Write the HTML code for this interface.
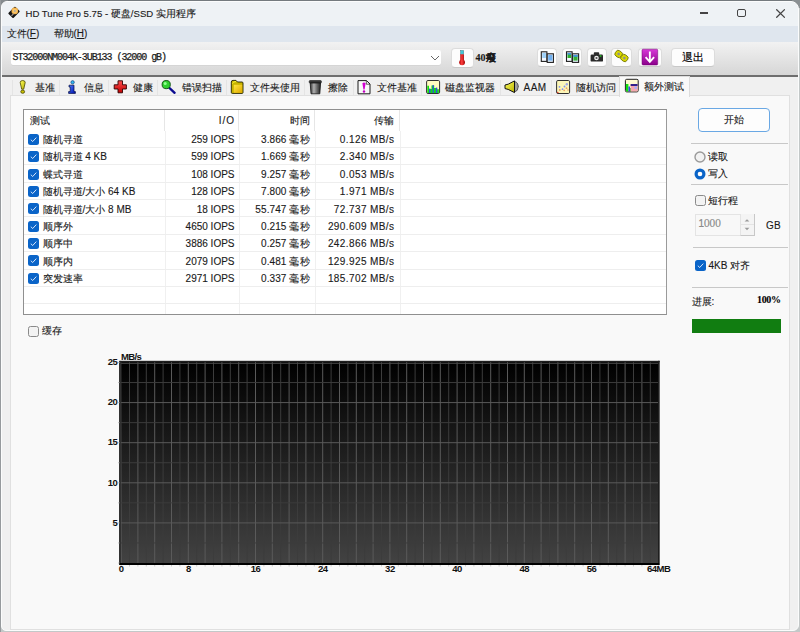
<!DOCTYPE html>
<html><head><meta charset="utf-8">
<style>
html,body{margin:0;padding:0;}
body{width:800px;height:632px;overflow:hidden;position:relative;background:#e8e8e8;font-family:"Liberation Sans",sans-serif;font-size:10px;color:#1a1a1a;}
.abs{position:absolute;}
.t{white-space:nowrap;line-height:12px;font-size:10px;font-weight:500;-webkit-text-stroke:0.12px #1a1a1a;}
.r{text-align:right;}
.tbtn{box-sizing:border-box;background:#fdfdfd;border:1px solid #dcdcdc;border-bottom-color:#c8c8c8;border-radius:4px;display:flex;align-items:center;justify-content:center;}
.clab{font-size:9.5px;line-height:11px;color:#111;white-space:nowrap;font-weight:bold;letter-spacing:-0.5px;}
.sep{position:absolute;height:1px;background:#c8c8c8;}
</style></head><body>
<div class="abs" style="left:0;top:0;width:800px;height:632px;background:#c3c8c8"></div>
<div class="abs" style="left:0;top:0;width:800px;height:1px;background:#747a7e"></div>
<div class="abs" style="left:0;top:0;width:8px;height:8px;background:#858b8e"></div>
<div class="abs" style="left:792px;top:0;width:8px;height:8px;background:#8a9093"></div>
<div class="abs" style="left:0;top:0;width:1px;height:632px;background:#969a9d"></div>
<div class="abs" style="left:1px;top:1px;width:796px;height:628px;border:1px solid #fbfcfc;border-radius:6px 8px 6px 5px;background:#f0f0f0;overflow:hidden">
  <div class="abs" style="left:0;top:0;width:797px;height:24px;background:#eef2f5"></div>
  <div class="abs" style="left:0;top:24px;width:797px;height:16px;background:#dfe6ee"></div>
  <div class="abs" style="left:0;top:40px;width:797px;height:33px;background:linear-gradient(#f2f2f2,#d6d6d6)"></div>
  <div class="abs" style="left:0;top:73px;width:797px;height:1.5px;background:#6e6e6e"></div>
</div>
<div class="abs" style="left:0;top:0"><svg width="24" height="24" viewBox="0 0 24 24"><g transform="translate(14 12.4) rotate(-45)"><rect x="-4.9" y="-3.6" width="9.8" height="7.2" rx="0.9" fill="#141414"/></g><circle cx="14.8" cy="10.9" r="3.3" fill="#f2b24a"/><circle cx="14.8" cy="10.9" r="2.2" fill="#f8c870"/><circle cx="14.8" cy="10.9" r="1" fill="#b0aca0"/><path d="M11.5 15.8 L13.6 13.6" stroke="#a09890" stroke-width="1.2"/></svg></div>
<div class="abs t" style="left:25.5px;top:7.5px;font-size:9.6px;color:#1a1a1a">HD Tune Pro 5.75 - 硬盘/SSD 实用程序</div>
<div class="abs" style="left:699.6px;top:12.3px;width:8.3px;height:1.4px;background:#444"></div>
<div class="abs" style="left:737.4px;top:8.9px;width:6.2px;height:6.2px;border:1.3px solid #444;border-radius:2px"></div>
<svg class="abs" style="left:776px;top:8.8px" width="9.2" height="9" viewBox="0 0 9.2 9"><path d="M0.3 0.3 L8.9 8.7 M8.9 0.3 L0.3 8.7" stroke="#444" stroke-width="1.25"/></svg>
<div class="abs t" style="left:6.5px;top:28px">文件(<u>F</u>)</div>
<div class="abs t" style="left:53.5px;top:28px">帮助(<u>H</u>)</div>

<div class="abs" style="left:10.5px;top:49.6px;width:430.8px;height:15.4px;background:#fff;border-radius:2px;box-shadow:0 0.5px 0 #ccc"></div>
<div class="abs" style="left:12.5px;top:52px;font-family:'Liberation Mono',monospace;font-size:10px;letter-spacing:-1.05px;line-height:12px;white-space:nowrap;color:#222;-webkit-text-stroke:0.25px #222">ST32000NM004K-3UB133 (32000 gB)</div>
<svg class="abs" style="left:430px;top:54.5px" width="10" height="6" viewBox="0 0 10 6"><path d="M1 1 L5 5 L9 1" fill="none" stroke="#666" stroke-width="1"/></svg>

<div class="abs tbtn" style="left:450.9px;top:47.9px;width:23.0px;height:19.800000000000004px"></div>
<div class="abs t" style="left:475.5px;top:52px;font-weight:bold;font-family:'Liberation Serif',serif;font-size:10px">40癈</div>
<div class="abs tbtn" style="left:536.75px;top:47.7px;width:20.25px;height:19.5px"></div>
<div class="abs tbtn" style="left:562px;top:47.7px;width:20px;height:19.5px"></div>
<div class="abs tbtn" style="left:586.5px;top:47.7px;width:20.5px;height:19.5px"></div>
<div class="abs tbtn" style="left:610.5px;top:47.7px;width:21.700000000000045px;height:19.5px"></div>
<div class="abs tbtn" style="left:638px;top:47.7px;width:23.5px;height:19.5px"></div>
<div class="abs tbtn" style="left:671.2px;top:47.7px;width:43.5px;height:19.5px"><span class="t" style="color:#000;font-size:11px;-webkit-text-stroke:0.15px #000">退出</span></div>
<svg class="abs" style="left:0;top:0" width="800" height="80" viewBox="0 0 800 80">
<defs><linearGradient id="pg" x1="0" y1="0" x2="0" y2="1"><stop offset="0" stop-color="#d838d8"/><stop offset="1" stop-color="#8a008a"/></linearGradient>
<linearGradient id="tg" x1="0" y1="0" x2="1" y2="0"><stop offset="0" stop-color="#b00000"/><stop offset="0.45" stop-color="#ff4040"/><stop offset="1" stop-color="#a00000"/></linearGradient></defs>
<!-- thermometer -->
<rect x="460.6" y="50.5" width="3" height="4" fill="#40c8d8" stroke="#206070" stroke-width="0.4"/>
<rect x="460.3" y="54.3" width="3.6" height="7" fill="url(#tg)"/>
<circle cx="462.1" cy="62.3" r="2.9" fill="url(#tg)"/>
<!-- icon1 -->
<rect x="541.3" y="51.8" width="5.6" height="9.6" fill="#f4f8ff" stroke="#202020" stroke-width="1.1"/>
<rect x="542.3" y="53" width="3.6" height="5" fill="#9cd0f8"/>
<rect x="547.2" y="53.8" width="6.2" height="8.6" fill="#e8f2ff" stroke="#202020" stroke-width="1.1"/>
<rect x="548.2" y="55" width="4.2" height="5.6" fill="#70b0f0"/>
<!-- icon2 -->
<rect x="566.5" y="51.8" width="5.6" height="9.6" fill="#f4f8ff" stroke="#202020" stroke-width="1.1"/>
<rect x="567.5" y="53" width="3.6" height="5" fill="#30b030"/>
<rect x="567.5" y="53" width="3.6" height="1.6" fill="#4090e0"/>
<rect x="572.4" y="53.8" width="6.2" height="8.6" fill="#e8f2ff" stroke="#202020" stroke-width="1.1"/>
<rect x="573.4" y="55" width="4.2" height="5.6" fill="#38b038"/>
<rect x="573.4" y="55" width="4.2" height="1.8" fill="#4090e0"/>
<!-- camera -->
<rect x="590.6" y="54.6" width="12.4" height="7" rx="1.2" fill="#2a2a2a"/>
<rect x="593.8" y="52.2" width="5.4" height="2.8" rx="0.8" fill="#2a2a2a"/>
<circle cx="596.5" cy="58" r="2.3" fill="#f0f0f0"/>
<circle cx="596.5" cy="58" r="1.1" fill="#505050"/>
<rect x="599.8" y="55.3" width="1.6" height="1.4" fill="#20d020"/>
<!-- chain -->
<g transform="rotate(35 621.5 56)">
<rect x="614.5" y="52.8" width="7" height="6.4" rx="2.5" fill="#d8d800" stroke="#707000" stroke-width="0.8"/>
<rect x="621.5" y="52.8" width="7" height="6.4" rx="2.5" fill="#d8d800" stroke="#707000" stroke-width="0.8"/>
<circle cx="618" cy="56" r="1.3" fill="#909090"/><circle cx="625" cy="56" r="1.3" fill="#909090"/>
</g>
<!-- purple -->
<rect x="642" y="49.2" width="15.7" height="15.8" rx="1" fill="url(#pg)" stroke="#700070" stroke-width="0.5"/>
<path d="M649.85 51.5 L649.85 61.5" stroke="#fff" stroke-width="1.9"/>
<path d="M645.6 57.2 L649.85 61.8 L654.1 57.2" fill="none" stroke="#fff" stroke-width="1.9"/>
</svg>

<!-- tab panel -->
<div class="abs" style="left:9.5px;top:95px;width:778.5px;height:532.5px;background:#f9f9f9;border:1px solid #e0e0e0"></div>
<div class="abs" style="left:12px;top:79.6px;width:46px;height:15.4px;background:#f0f0f0;border-left:1px solid #e4e4e4"></div>
<div class="abs t" style="left:35px;top:82.3px">基准</div>
<div class="abs" style="left:59px;top:79.6px;width:47.900000000000006px;height:15.4px;background:#f0f0f0;border-left:1px solid #e4e4e4"></div>
<div class="abs t" style="left:83.75px;top:82.3px">信息</div>
<div class="abs" style="left:107.9px;top:79.6px;width:48.099999999999994px;height:15.4px;background:#f0f0f0;border-left:1px solid #e4e4e4"></div>
<div class="abs t" style="left:132.6px;top:82.3px">健康</div>
<div class="abs" style="left:157px;top:79.6px;width:67.75px;height:15.4px;background:#f0f0f0;border-left:1px solid #e4e4e4"></div>
<div class="abs t" style="left:181.7px;top:82.3px">错误扫描</div>
<div class="abs" style="left:225.75px;top:79.6px;width:77.0px;height:15.4px;background:#f0f0f0;border-left:1px solid #e4e4e4"></div>
<div class="abs t" style="left:249.5px;top:82.3px">文件夹使用</div>
<div class="abs" style="left:303.75px;top:79.6px;width:48.25px;height:15.4px;background:#f0f0f0;border-left:1px solid #e4e4e4"></div>
<div class="abs t" style="left:328.25px;top:82.3px">擦除</div>
<div class="abs" style="left:353px;top:79.6px;width:67px;height:15.4px;background:#f0f0f0;border-left:1px solid #e4e4e4"></div>
<div class="abs t" style="left:377px;top:82.3px">文件基准</div>
<div class="abs" style="left:421px;top:79.6px;width:77.69999999999999px;height:15.4px;background:#f0f0f0;border-left:1px solid #e4e4e4"></div>
<div class="abs t" style="left:445px;top:82.3px">磁盘监视器</div>
<div class="abs" style="left:499.7px;top:79.6px;width:50.55000000000001px;height:15.4px;background:#f0f0f0;border-left:1px solid #e4e4e4"></div>
<div class="abs t" style="left:523.5px;top:82.3px;letter-spacing:0.5px">AAM</div>
<div class="abs" style="left:551.25px;top:79.6px;width:66.5px;height:15.4px;background:#f0f0f0;border-left:1px solid #e4e4e4"></div>
<div class="abs t" style="left:575.5px;top:82.3px">随机访问</div>
<div class="abs" style="left:618.75px;top:76px;width:69.25px;height:20px;background:#f9f9f9;border:1px solid #dcdcdc;border-bottom:none"></div>
<div class="abs t" style="left:644px;top:80.5px">额外测试</div>
<svg class="abs" style="left:0;top:0" width="800" height="100" viewBox="0 0 800 100">
<defs>
<linearGradient id="gy" x1="0" y1="0" x2="1" y2="1"><stop offset="0" stop-color="#ffff60"/><stop offset="1" stop-color="#b8b000"/></linearGradient>
<linearGradient id="gr" x1="0" y1="0" x2="0" y2="1"><stop offset="0" stop-color="#ff5050"/><stop offset="1" stop-color="#c00000"/></linearGradient>
<linearGradient id="gb" x1="0" y1="0" x2="1" y2="1"><stop offset="0" stop-color="#4a7aff"/><stop offset="1" stop-color="#0010b0"/></linearGradient>
<linearGradient id="gf" x1="0" y1="0" x2="1" y2="1"><stop offset="0" stop-color="#ffe640"/><stop offset="1" stop-color="#e0a800"/></linearGradient>
<linearGradient id="gt" x1="0" y1="0" x2="1" y2="0"><stop offset="0" stop-color="#303030"/><stop offset="0.35" stop-color="#b0b0b0"/><stop offset="0.7" stop-color="#606060"/><stop offset="1" stop-color="#202020"/></linearGradient>
</defs>
<!-- 1 exclamation -->
<path d="M20.2 82.6 Q20.2 80.5 22.7 80.5 Q25.2 80.5 25.2 82.6 L23.7 89.2 L21.7 89.2 Z" fill="url(#gy)" stroke="#4a4600" stroke-width="0.8"/>
<ellipse cx="22.7" cy="91.7" rx="1.9" ry="1.6" fill="#c8c000" stroke="#4a4600" stroke-width="0.8"/>
<!-- 2 info -->
<circle cx="72.6" cy="82.3" r="1.7" fill="#30b8f0" stroke="#103070" stroke-width="0.6"/>
<path d="M69 85.2 L74 85.2 L74 91.6 L75.4 91.6 L75.4 93.4 L68.6 93.4 L68.6 91.6 L70.2 91.6 L70.2 87 L69 87 Z" fill="url(#gb)" stroke="#000a40" stroke-width="0.7"/>
<!-- 3 cross -->
<path d="M118 80.8 L122.5 80.8 L122.5 84.8 L126.4 84.8 L126.4 89 L122.5 89 L122.5 92.8 L118 92.8 L118 89 L114.2 89 L114.2 84.8 L118 84.8 Z" fill="url(#gr)" stroke="#300000" stroke-width="0.9" stroke-linejoin="round"/>
<!-- 4 magnifier -->
<line x1="169.5" y1="88" x2="174.6" y2="92.8" stroke="#0a0a90" stroke-width="2.4" stroke-linecap="round"/>
<circle cx="166.2" cy="84.6" r="4.1" fill="#30d030" stroke="#0a4a0a" stroke-width="0.9"/>
<circle cx="165.2" cy="83.4" r="1.5" fill="#90ff90"/>
<!-- 5 folder -->
<path d="M231.3 82 Q231.3 80.4 233 80.4 L236 80.4 L237.5 82 L242 82 Q243 82 243 83 L243 92.6 Q243 93.4 242 93.4 L232.3 93.4 Q231.3 93.4 231.3 92.4 Z" fill="#c8b400" stroke="#202000" stroke-width="0.9"/>
<rect x="233.8" y="84.8" width="8.4" height="8" fill="url(#gf)"/>
<path d="M232.3 83.5 Q233.5 81.5 236 81.5" fill="none" stroke="#ffff40" stroke-width="0.9"/>
<!-- 6 trash -->
<rect x="309.2" y="80.6" width="12.2" height="2.4" rx="0.8" fill="#3a3a3a" stroke="#111" stroke-width="0.6"/>
<path d="M310.2 83 L320.6 83 L319.8 93.8 L311 93.8 Z" fill="url(#gt)" stroke="#111" stroke-width="0.8"/>
<!-- 7 document -->
<path d="M358 80.6 L366.5 80.6 L370 84 L370 93.8 L358 93.8 Z" fill="#f8f8f8" stroke="#1a1a1a" stroke-width="1"/>
<path d="M366.3 80.8 L366.3 84.2 L369.8 84.2" fill="none" stroke="#1a1a1a" stroke-width="0.7"/>
<path d="M362.4 83.2 Q364 81.8 365.6 83.2 L364.6 89.4 L363.4 89.4 Z" fill="#d000d0"/>
<circle cx="364" cy="91.5" r="1.2" fill="#c000c0"/>
<!-- 8 monitor -->
<rect x="426.6" y="80.5" width="13" height="13" rx="1.3" fill="#fffcc0" stroke="#303030" stroke-width="1"/>
<path d="M427.3 93 L427.3 85.8 L429 85.8 L429 89 L431.5 89 L431.5 85.6 L434.2 85.6 L434.2 88 L436.5 88 L436.5 89.2 L438.9 89.2 L438.9 93 Z" fill="#10e010"/>
<rect x="429" y="88.6" width="1.5" height="4.4" fill="#3050e0"/>
<rect x="432.5" y="85" width="1.3" height="8" fill="#3050e0"/>
<rect x="435.8" y="87.6" width="1.5" height="5.4" fill="#3050e0"/>
<!-- 9 speaker -->
<path d="M514.5 88 Q518.2 88 518.2 86.7 Q518.2 83.5 514.5 83.5 Z" fill="#909090" stroke="#404040" stroke-width="0.6"/>
<path d="M514.5 92 Q518.2 91 518.2 87 Q518.2 82 514.5 81.5 Z" fill="#a0a0a0" stroke="#303030" stroke-width="0.7"/>
<path d="M505 85 L508.2 84.2 L514.5 80.9 L514.5 92.6 L508.2 89.4 L505 88.6 Z" fill="url(#gy)" stroke="#111" stroke-width="1" stroke-linejoin="round"/>
<!-- 10 random -->
<rect x="556.6" y="80.5" width="13" height="13" rx="1.3" fill="#fcf6b8" stroke="#303030" stroke-width="1"/>
<circle cx="559.5" cy="86.8" r="0.9" fill="#8090f0"/><circle cx="562.5" cy="89.2" r="0.9" fill="#8090f0"/><circle cx="564.5" cy="86.5" r="0.9" fill="#8090f0"/><circle cx="566.8" cy="84.2" r="1.2" fill="#a0a8e8"/>
<circle cx="559.8" cy="90" r="0.9" fill="#f0a060"/><circle cx="564.2" cy="90.3" r="0.9" fill="#f0a060"/><circle cx="566.5" cy="88.2" r="0.9" fill="#f0a060"/><circle cx="568" cy="90" r="0.8" fill="#f0a060"/>
<circle cx="557.8" cy="92.5" r="0.7" fill="#e02020"/>
<!-- 11 extra -->
<rect x="625.4" y="79.3" width="12.8" height="12.6" rx="1.3" fill="#fffcd0" stroke="#202020" stroke-width="1"/>
<rect x="626" y="84" width="2.4" height="7.4" fill="#10e010"/>
<rect x="628.4" y="86.5" width="1.6" height="4.9" fill="#3050e0"/>
<rect x="630" y="88" width="0.8" height="3.4" fill="#10a010"/>
<rect x="630.6" y="84.2" width="7" height="7.2" fill="#f4a8b0"/>
<rect x="630.6" y="84.2" width="7" height="1.6" fill="#000080"/>
<rect x="634.5" y="86.5" width="2.4" height="2.4" fill="#a0b0ff"/>
</svg>

<div class="abs" style="left:23px;top:109px;width:642px;height:204.2px;background:#fff;border:1px solid #8f8f8f;border-right-color:#9a9a9a"></div>
<div class="abs t" style="left:30px;top:115px">测试</div>
<div class="abs t r" style="right:565px;top:115px;letter-spacing:1px">I/O</div>
<div class="abs t r" style="right:490.5px;top:115px">时间</div>
<div class="abs t r" style="right:406px;top:115px">传输</div>
<div class="abs" style="left:164px;top:110px;width:1px;height:20.5px;background:#e6e6e6"></div>
<div class="abs" style="left:165.2px;top:130.5px;width:1px;height:183.7px;background:#f0f0f0"></div>
<div class="abs" style="left:238px;top:110px;width:1px;height:20.5px;background:#e6e6e6"></div>
<div class="abs" style="left:239.4px;top:130.5px;width:1px;height:183.7px;background:#f0f0f0"></div>
<div class="abs" style="left:313.5px;top:110px;width:1px;height:20.5px;background:#e6e6e6"></div>
<div class="abs" style="left:315.2px;top:130.5px;width:1px;height:183.7px;background:#f0f0f0"></div>
<div class="abs" style="left:399px;top:110px;width:1px;height:20.5px;background:#e6e6e6"></div>
<div class="abs" style="left:399.5px;top:130.5px;width:1px;height:183.7px;background:#f0f0f0"></div>
<div class="abs" style="left:24px;top:146.9px;width:642px;height:1px;background:#eeeeee"></div>
<div class="abs" style="left:24px;top:164.3px;width:642px;height:1px;background:#eeeeee"></div>
<div class="abs" style="left:24px;top:181.6px;width:642px;height:1px;background:#eeeeee"></div>
<div class="abs" style="left:24px;top:199.0px;width:642px;height:1px;background:#eeeeee"></div>
<div class="abs" style="left:24px;top:216.4px;width:642px;height:1px;background:#eeeeee"></div>
<div class="abs" style="left:24px;top:233.8px;width:642px;height:1px;background:#eeeeee"></div>
<div class="abs" style="left:24px;top:251.2px;width:642px;height:1px;background:#eeeeee"></div>
<div class="abs" style="left:24px;top:268.5px;width:642px;height:1px;background:#eeeeee"></div>
<div class="abs" style="left:24px;top:285.9px;width:642px;height:1px;background:#eeeeee"></div>
<div class="abs" style="left:24px;top:303.3px;width:642px;height:1px;background:#eeeeee"></div>
<div class="abs" style="left:27.8px;top:133.7px;width:11px;height:11px"><svg width="11" height="11" viewBox="0 0 11 11"><rect x="0" y="0" width="11" height="11" rx="2.5" fill="#0a64c8"/><path d="M2.8 5.7 L4.7 7.5 L8.3 3.6" fill="none" stroke="#eef4ff" stroke-width="0.9"/></svg></div>
<div class="abs t" style="left:42.5px;top:134.0px">随机寻道</div>
<div class="abs t r" style="right:565.5px;top:134.0px">259 IOPS</div>
<div class="abs t r" style="right:490.4px;top:134.0px;letter-spacing:0.1px">3.866 毫秒</div>
<div class="abs t r" style="right:405.6px;top:134.0px;letter-spacing:0.4px">0.126 MB/s</div>
<div class="abs" style="left:27.8px;top:151.1px;width:11px;height:11px"><svg width="11" height="11" viewBox="0 0 11 11"><rect x="0" y="0" width="11" height="11" rx="2.5" fill="#0a64c8"/><path d="M2.8 5.7 L4.7 7.5 L8.3 3.6" fill="none" stroke="#eef4ff" stroke-width="0.9"/></svg></div>
<div class="abs t" style="left:42.5px;top:151.4px">随机寻道 4 KB</div>
<div class="abs t r" style="right:565.5px;top:151.4px">599 IOPS</div>
<div class="abs t r" style="right:490.4px;top:151.4px;letter-spacing:0.1px">1.669 毫秒</div>
<div class="abs t r" style="right:405.6px;top:151.4px;letter-spacing:0.4px">2.340 MB/s</div>
<div class="abs" style="left:27.8px;top:168.5px;width:11px;height:11px"><svg width="11" height="11" viewBox="0 0 11 11"><rect x="0" y="0" width="11" height="11" rx="2.5" fill="#0a64c8"/><path d="M2.8 5.7 L4.7 7.5 L8.3 3.6" fill="none" stroke="#eef4ff" stroke-width="0.9"/></svg></div>
<div class="abs t" style="left:42.5px;top:168.8px">蝶式寻道</div>
<div class="abs t r" style="right:565.5px;top:168.8px">108 IOPS</div>
<div class="abs t r" style="right:490.4px;top:168.8px;letter-spacing:0.1px">9.257 毫秒</div>
<div class="abs t r" style="right:405.6px;top:168.8px;letter-spacing:0.4px">0.053 MB/s</div>
<div class="abs" style="left:27.8px;top:185.8px;width:11px;height:11px"><svg width="11" height="11" viewBox="0 0 11 11"><rect x="0" y="0" width="11" height="11" rx="2.5" fill="#0a64c8"/><path d="M2.8 5.7 L4.7 7.5 L8.3 3.6" fill="none" stroke="#eef4ff" stroke-width="0.9"/></svg></div>
<div class="abs t" style="left:42.5px;top:186.1px">随机寻道/大小 64 KB</div>
<div class="abs t r" style="right:565.5px;top:186.1px">128 IOPS</div>
<div class="abs t r" style="right:490.4px;top:186.1px;letter-spacing:0.1px">7.800 毫秒</div>
<div class="abs t r" style="right:405.6px;top:186.1px;letter-spacing:0.4px">1.971 MB/s</div>
<div class="abs" style="left:27.8px;top:203.2px;width:11px;height:11px"><svg width="11" height="11" viewBox="0 0 11 11"><rect x="0" y="0" width="11" height="11" rx="2.5" fill="#0a64c8"/><path d="M2.8 5.7 L4.7 7.5 L8.3 3.6" fill="none" stroke="#eef4ff" stroke-width="0.9"/></svg></div>
<div class="abs t" style="left:42.5px;top:203.5px">随机寻道/大小 8 MB</div>
<div class="abs t r" style="right:565.5px;top:203.5px">18 IOPS</div>
<div class="abs t r" style="right:490.4px;top:203.5px;letter-spacing:0.1px">55.747 毫秒</div>
<div class="abs t r" style="right:405.6px;top:203.5px;letter-spacing:0.4px">72.737 MB/s</div>
<div class="abs" style="left:27.8px;top:220.6px;width:11px;height:11px"><svg width="11" height="11" viewBox="0 0 11 11"><rect x="0" y="0" width="11" height="11" rx="2.5" fill="#0a64c8"/><path d="M2.8 5.7 L4.7 7.5 L8.3 3.6" fill="none" stroke="#eef4ff" stroke-width="0.9"/></svg></div>
<div class="abs t" style="left:42.5px;top:220.9px">顺序外</div>
<div class="abs t r" style="right:565.5px;top:220.9px">4650 IOPS</div>
<div class="abs t r" style="right:490.4px;top:220.9px;letter-spacing:0.1px">0.215 毫秒</div>
<div class="abs t r" style="right:405.6px;top:220.9px;letter-spacing:0.4px">290.609 MB/s</div>
<div class="abs" style="left:27.8px;top:238.0px;width:11px;height:11px"><svg width="11" height="11" viewBox="0 0 11 11"><rect x="0" y="0" width="11" height="11" rx="2.5" fill="#0a64c8"/><path d="M2.8 5.7 L4.7 7.5 L8.3 3.6" fill="none" stroke="#eef4ff" stroke-width="0.9"/></svg></div>
<div class="abs t" style="left:42.5px;top:238.3px">顺序中</div>
<div class="abs t r" style="right:565.5px;top:238.3px">3886 IOPS</div>
<div class="abs t r" style="right:490.4px;top:238.3px;letter-spacing:0.1px">0.257 毫秒</div>
<div class="abs t r" style="right:405.6px;top:238.3px;letter-spacing:0.4px">242.866 MB/s</div>
<div class="abs" style="left:27.8px;top:255.4px;width:11px;height:11px"><svg width="11" height="11" viewBox="0 0 11 11"><rect x="0" y="0" width="11" height="11" rx="2.5" fill="#0a64c8"/><path d="M2.8 5.7 L4.7 7.5 L8.3 3.6" fill="none" stroke="#eef4ff" stroke-width="0.9"/></svg></div>
<div class="abs t" style="left:42.5px;top:255.7px">顺序内</div>
<div class="abs t r" style="right:565.5px;top:255.7px">2079 IOPS</div>
<div class="abs t r" style="right:490.4px;top:255.7px;letter-spacing:0.1px">0.481 毫秒</div>
<div class="abs t r" style="right:405.6px;top:255.7px;letter-spacing:0.4px">129.925 MB/s</div>
<div class="abs" style="left:27.8px;top:272.7px;width:11px;height:11px"><svg width="11" height="11" viewBox="0 0 11 11"><rect x="0" y="0" width="11" height="11" rx="2.5" fill="#0a64c8"/><path d="M2.8 5.7 L4.7 7.5 L8.3 3.6" fill="none" stroke="#eef4ff" stroke-width="0.9"/></svg></div>
<div class="abs t" style="left:42.5px;top:273.0px">突发速率</div>
<div class="abs t r" style="right:565.5px;top:273.0px">2971 IOPS</div>
<div class="abs t r" style="right:490.4px;top:273.0px;letter-spacing:0.1px">0.337 毫秒</div>
<div class="abs t r" style="right:405.6px;top:273.0px;letter-spacing:0.4px">185.702 MB/s</div>

<div class="abs" style="left:28.3px;top:325.8px;width:9px;height:9px;border:1px solid #8a8a8a;border-radius:2.5px;background:#f3f3f3"></div>
<div class="abs t" style="left:41.9px;top:325.3px">缓存</div>

<!-- right panel -->
<div class="abs" style="box-sizing:border-box;left:698px;top:108.2px;width:71.5px;height:23.6px;border:1.6px solid #6aa8e4;border-radius:4px;background:#fdfdfd"></div>
<div class="abs t" style="left:698.4px;width:70.8px;text-align:center;top:114px">开始</div>
<div class="sep" style="left:691px;top:142.5px;width:97px"></div>
<svg class="abs" style="left:694px;top:151px" width="12" height="12" viewBox="0 0 12 12"><circle cx="6" cy="6" r="5" fill="#f2f2f2" stroke="#9a9a9a" stroke-width="1.4"/></svg>
<div class="abs t" style="left:708px;top:151px">读取</div>
<svg class="abs" style="left:694px;top:168px" width="12" height="12" viewBox="0 0 12 12"><circle cx="6" cy="6" r="5.5" fill="#0a64c8"/><circle cx="6" cy="6" r="2.3" fill="#fff"/></svg>
<div class="abs t" style="left:708px;top:168px">写入</div>
<div class="sep" style="left:691px;top:183.5px;width:97px"></div>
<div class="abs" style="left:695.2px;top:195px;width:9px;height:9px;border:1px solid #8a8a8a;border-radius:2.5px;background:#f3f3f3"></div>
<div class="abs t" style="left:708.3px;top:194.6px">短行程</div>
<div class="abs" style="left:695px;top:214.4px;width:58px;height:19.5px;border:1px solid #e4e4e4;background:#f8f8f8"></div>
<div class="abs" style="box-sizing:border-box;left:739.5px;top:214.4px;width:15.5px;height:21.5px;border-left:1px solid #e4e4e4;border-right:1.5px solid #c8c8c8;border-bottom:1.5px solid #c8c8c8;background:#f4f4f4"></div>
<div class="abs" style="left:740.5px;top:224.3px;width:13px;height:1px;background:#e4e4e4"></div>
<svg class="abs" style="left:743px;top:217px" width="8" height="16" viewBox="0 0 8 16"><path d="M1.6 4.6 L4 2.2 L6.4 4.6 Z" fill="#9a9a9a"/><path d="M1.6 10.8 L4 13.2 L6.4 10.8 Z" fill="#9a9a9a"/></svg>
<div class="abs t" style="left:698.5px;top:217.5px;color:#9a9a9a">1000</div>
<div class="abs t" style="left:766px;top:220px;letter-spacing:0.3px">GB</div>
<div class="sep" style="left:693px;top:246.5px;width:95px"></div>
<div class="abs" style="left:695px;top:260.3px;width:11px;height:11px"><svg width="11" height="11" viewBox="0 0 11 11"><rect x="0" y="0" width="11" height="11" rx="2.5" fill="#0a64c8"/><path d="M2.8 5.7 L4.7 7.5 L8.3 3.6" fill="none" stroke="#eef4ff" stroke-width="0.9"/></svg></div>
<div class="abs t" style="left:708.5px;top:259.5px">4KB 对齐</div>
<div class="sep" style="left:692px;top:286.5px;width:96px"></div>
<div class="abs t" style="left:691.5px;top:295.5px">进展:</div>
<div class="abs t" style="right:19.5px;top:294px;font-weight:bold;font-family:'Liberation Serif',serif;font-size:10px;color:#000;letter-spacing:-0.4px">100%</div>
<div class="abs" style="left:692.2px;top:318.5px;width:89px;height:14.5px;background:#117d11"></div>

<svg class="abs" style="left:0;top:0" width="800" height="632" viewBox="0 0 800 632">
<defs><linearGradient id="cg" x1="0" y1="0" x2="0" y2="1"><stop offset="0" stop-color="#000"/><stop offset="1" stop-color="#424242"/></linearGradient></defs>
<rect x="121.1" y="361.8" width="537.6" height="201.2" fill="url(#cg)"/>
<line x1="129.50" y1="361.8" x2="129.50" y2="563.0" stroke="#3c3c3c" stroke-width="1"/>
<line x1="137.90" y1="361.8" x2="137.90" y2="563.0" stroke="#5a5a5a" stroke-width="1"/>
<line x1="146.30" y1="361.8" x2="146.30" y2="563.0" stroke="#3c3c3c" stroke-width="1"/>
<line x1="154.70" y1="361.8" x2="154.70" y2="563.0" stroke="#5a5a5a" stroke-width="1"/>
<line x1="163.10" y1="361.8" x2="163.10" y2="563.0" stroke="#3c3c3c" stroke-width="1"/>
<line x1="171.50" y1="361.8" x2="171.50" y2="563.0" stroke="#5a5a5a" stroke-width="1"/>
<line x1="179.90" y1="361.8" x2="179.90" y2="563.0" stroke="#3c3c3c" stroke-width="1"/>
<line x1="188.30" y1="361.8" x2="188.30" y2="563.0" stroke="#5a5a5a" stroke-width="1"/>
<line x1="196.70" y1="361.8" x2="196.70" y2="563.0" stroke="#3c3c3c" stroke-width="1"/>
<line x1="205.10" y1="361.8" x2="205.10" y2="563.0" stroke="#5a5a5a" stroke-width="1"/>
<line x1="213.50" y1="361.8" x2="213.50" y2="563.0" stroke="#3c3c3c" stroke-width="1"/>
<line x1="221.90" y1="361.8" x2="221.90" y2="563.0" stroke="#5a5a5a" stroke-width="1"/>
<line x1="230.30" y1="361.8" x2="230.30" y2="563.0" stroke="#3c3c3c" stroke-width="1"/>
<line x1="238.70" y1="361.8" x2="238.70" y2="563.0" stroke="#5a5a5a" stroke-width="1"/>
<line x1="247.10" y1="361.8" x2="247.10" y2="563.0" stroke="#3c3c3c" stroke-width="1"/>
<line x1="255.50" y1="361.8" x2="255.50" y2="563.0" stroke="#5a5a5a" stroke-width="1"/>
<line x1="263.90" y1="361.8" x2="263.90" y2="563.0" stroke="#3c3c3c" stroke-width="1"/>
<line x1="272.30" y1="361.8" x2="272.30" y2="563.0" stroke="#5a5a5a" stroke-width="1"/>
<line x1="280.70" y1="361.8" x2="280.70" y2="563.0" stroke="#3c3c3c" stroke-width="1"/>
<line x1="289.10" y1="361.8" x2="289.10" y2="563.0" stroke="#5a5a5a" stroke-width="1"/>
<line x1="297.50" y1="361.8" x2="297.50" y2="563.0" stroke="#3c3c3c" stroke-width="1"/>
<line x1="305.90" y1="361.8" x2="305.90" y2="563.0" stroke="#5a5a5a" stroke-width="1"/>
<line x1="314.30" y1="361.8" x2="314.30" y2="563.0" stroke="#3c3c3c" stroke-width="1"/>
<line x1="322.70" y1="361.8" x2="322.70" y2="563.0" stroke="#5a5a5a" stroke-width="1"/>
<line x1="331.10" y1="361.8" x2="331.10" y2="563.0" stroke="#3c3c3c" stroke-width="1"/>
<line x1="339.50" y1="361.8" x2="339.50" y2="563.0" stroke="#5a5a5a" stroke-width="1"/>
<line x1="347.90" y1="361.8" x2="347.90" y2="563.0" stroke="#3c3c3c" stroke-width="1"/>
<line x1="356.30" y1="361.8" x2="356.30" y2="563.0" stroke="#5a5a5a" stroke-width="1"/>
<line x1="364.70" y1="361.8" x2="364.70" y2="563.0" stroke="#3c3c3c" stroke-width="1"/>
<line x1="373.10" y1="361.8" x2="373.10" y2="563.0" stroke="#5a5a5a" stroke-width="1"/>
<line x1="381.50" y1="361.8" x2="381.50" y2="563.0" stroke="#3c3c3c" stroke-width="1"/>
<line x1="389.90" y1="361.8" x2="389.90" y2="563.0" stroke="#5a5a5a" stroke-width="1"/>
<line x1="398.30" y1="361.8" x2="398.30" y2="563.0" stroke="#3c3c3c" stroke-width="1"/>
<line x1="406.70" y1="361.8" x2="406.70" y2="563.0" stroke="#5a5a5a" stroke-width="1"/>
<line x1="415.10" y1="361.8" x2="415.10" y2="563.0" stroke="#3c3c3c" stroke-width="1"/>
<line x1="423.50" y1="361.8" x2="423.50" y2="563.0" stroke="#5a5a5a" stroke-width="1"/>
<line x1="431.90" y1="361.8" x2="431.90" y2="563.0" stroke="#3c3c3c" stroke-width="1"/>
<line x1="440.30" y1="361.8" x2="440.30" y2="563.0" stroke="#5a5a5a" stroke-width="1"/>
<line x1="448.70" y1="361.8" x2="448.70" y2="563.0" stroke="#3c3c3c" stroke-width="1"/>
<line x1="457.10" y1="361.8" x2="457.10" y2="563.0" stroke="#5a5a5a" stroke-width="1"/>
<line x1="465.50" y1="361.8" x2="465.50" y2="563.0" stroke="#3c3c3c" stroke-width="1"/>
<line x1="473.90" y1="361.8" x2="473.90" y2="563.0" stroke="#5a5a5a" stroke-width="1"/>
<line x1="482.30" y1="361.8" x2="482.30" y2="563.0" stroke="#3c3c3c" stroke-width="1"/>
<line x1="490.70" y1="361.8" x2="490.70" y2="563.0" stroke="#5a5a5a" stroke-width="1"/>
<line x1="499.10" y1="361.8" x2="499.10" y2="563.0" stroke="#3c3c3c" stroke-width="1"/>
<line x1="507.50" y1="361.8" x2="507.50" y2="563.0" stroke="#5a5a5a" stroke-width="1"/>
<line x1="515.90" y1="361.8" x2="515.90" y2="563.0" stroke="#3c3c3c" stroke-width="1"/>
<line x1="524.30" y1="361.8" x2="524.30" y2="563.0" stroke="#5a5a5a" stroke-width="1"/>
<line x1="532.70" y1="361.8" x2="532.70" y2="563.0" stroke="#3c3c3c" stroke-width="1"/>
<line x1="541.10" y1="361.8" x2="541.10" y2="563.0" stroke="#5a5a5a" stroke-width="1"/>
<line x1="549.50" y1="361.8" x2="549.50" y2="563.0" stroke="#3c3c3c" stroke-width="1"/>
<line x1="557.90" y1="361.8" x2="557.90" y2="563.0" stroke="#5a5a5a" stroke-width="1"/>
<line x1="566.30" y1="361.8" x2="566.30" y2="563.0" stroke="#3c3c3c" stroke-width="1"/>
<line x1="574.70" y1="361.8" x2="574.70" y2="563.0" stroke="#5a5a5a" stroke-width="1"/>
<line x1="583.10" y1="361.8" x2="583.10" y2="563.0" stroke="#3c3c3c" stroke-width="1"/>
<line x1="591.50" y1="361.8" x2="591.50" y2="563.0" stroke="#5a5a5a" stroke-width="1"/>
<line x1="599.90" y1="361.8" x2="599.90" y2="563.0" stroke="#3c3c3c" stroke-width="1"/>
<line x1="608.30" y1="361.8" x2="608.30" y2="563.0" stroke="#5a5a5a" stroke-width="1"/>
<line x1="616.70" y1="361.8" x2="616.70" y2="563.0" stroke="#3c3c3c" stroke-width="1"/>
<line x1="625.10" y1="361.8" x2="625.10" y2="563.0" stroke="#5a5a5a" stroke-width="1"/>
<line x1="633.50" y1="361.8" x2="633.50" y2="563.0" stroke="#3c3c3c" stroke-width="1"/>
<line x1="641.90" y1="361.8" x2="641.90" y2="563.0" stroke="#5a5a5a" stroke-width="1"/>
<line x1="650.30" y1="361.8" x2="650.30" y2="563.0" stroke="#3c3c3c" stroke-width="1"/>
<line x1="121.1" y1="542.95" x2="658.7" y2="542.95" stroke="#3c3c3c" stroke-width="1"/>
<line x1="121.1" y1="522.90" x2="658.7" y2="522.90" stroke="#5a5a5a" stroke-width="1"/>
<line x1="121.1" y1="502.85" x2="658.7" y2="502.85" stroke="#3c3c3c" stroke-width="1"/>
<line x1="121.1" y1="482.80" x2="658.7" y2="482.80" stroke="#5a5a5a" stroke-width="1"/>
<line x1="121.1" y1="462.75" x2="658.7" y2="462.75" stroke="#3c3c3c" stroke-width="1"/>
<line x1="121.1" y1="442.70" x2="658.7" y2="442.70" stroke="#5a5a5a" stroke-width="1"/>
<line x1="121.1" y1="422.65" x2="658.7" y2="422.65" stroke="#3c3c3c" stroke-width="1"/>
<line x1="121.1" y1="402.60" x2="658.7" y2="402.60" stroke="#5a5a5a" stroke-width="1"/>
<line x1="121.1" y1="382.55" x2="658.7" y2="382.55" stroke="#3c3c3c" stroke-width="1"/>
<line x1="121.1" y1="363.3" x2="658.7" y2="363.3" stroke="#4a4a4a" stroke-width="1"/>
<rect x="120.6" y="360.8" width="539.1" height="1.5" fill="#1e1e1e"/>
<rect x="658.0" y="360.8" width="1.7" height="202.2" fill="#1e1e1e"/>
<rect x="119.19999999999999" y="360.8" width="1.6" height="203.7" fill="#000"/>
<rect x="119.19999999999999" y="563.0" width="540.5" height="2" fill="#000"/>
<line x1="118.1" y1="563.00" x2="119.6" y2="563.00" stroke="#aaa" stroke-width="0.8"/>
<line x1="118.1" y1="542.95" x2="119.6" y2="542.95" stroke="#aaa" stroke-width="0.8"/>
<line x1="118.1" y1="522.90" x2="119.6" y2="522.90" stroke="#aaa" stroke-width="0.8"/>
<line x1="118.1" y1="502.85" x2="119.6" y2="502.85" stroke="#aaa" stroke-width="0.8"/>
<line x1="118.1" y1="482.80" x2="119.6" y2="482.80" stroke="#aaa" stroke-width="0.8"/>
<line x1="118.1" y1="462.75" x2="119.6" y2="462.75" stroke="#aaa" stroke-width="0.8"/>
<line x1="118.1" y1="442.70" x2="119.6" y2="442.70" stroke="#aaa" stroke-width="0.8"/>
<line x1="118.1" y1="422.65" x2="119.6" y2="422.65" stroke="#aaa" stroke-width="0.8"/>
<line x1="118.1" y1="402.60" x2="119.6" y2="402.60" stroke="#aaa" stroke-width="0.8"/>
<line x1="118.1" y1="382.55" x2="119.6" y2="382.55" stroke="#aaa" stroke-width="0.8"/>
<line x1="118.1" y1="362.50" x2="119.6" y2="362.50" stroke="#aaa" stroke-width="0.8"/>
<line x1="121.10" y1="565.0" x2="121.10" y2="566.5" stroke="#c0c0c0" stroke-width="0.8"/>
<line x1="129.50" y1="565.0" x2="129.50" y2="566.5" stroke="#c0c0c0" stroke-width="0.8"/>
<line x1="137.90" y1="565.0" x2="137.90" y2="566.5" stroke="#c0c0c0" stroke-width="0.8"/>
<line x1="146.30" y1="565.0" x2="146.30" y2="566.5" stroke="#c0c0c0" stroke-width="0.8"/>
<line x1="154.70" y1="565.0" x2="154.70" y2="566.5" stroke="#c0c0c0" stroke-width="0.8"/>
<line x1="163.10" y1="565.0" x2="163.10" y2="566.5" stroke="#c0c0c0" stroke-width="0.8"/>
<line x1="171.50" y1="565.0" x2="171.50" y2="566.5" stroke="#c0c0c0" stroke-width="0.8"/>
<line x1="179.90" y1="565.0" x2="179.90" y2="566.5" stroke="#c0c0c0" stroke-width="0.8"/>
<line x1="188.30" y1="565.0" x2="188.30" y2="566.5" stroke="#c0c0c0" stroke-width="0.8"/>
<line x1="196.70" y1="565.0" x2="196.70" y2="566.5" stroke="#c0c0c0" stroke-width="0.8"/>
<line x1="205.10" y1="565.0" x2="205.10" y2="566.5" stroke="#c0c0c0" stroke-width="0.8"/>
<line x1="213.50" y1="565.0" x2="213.50" y2="566.5" stroke="#c0c0c0" stroke-width="0.8"/>
<line x1="221.90" y1="565.0" x2="221.90" y2="566.5" stroke="#c0c0c0" stroke-width="0.8"/>
<line x1="230.30" y1="565.0" x2="230.30" y2="566.5" stroke="#c0c0c0" stroke-width="0.8"/>
<line x1="238.70" y1="565.0" x2="238.70" y2="566.5" stroke="#c0c0c0" stroke-width="0.8"/>
<line x1="247.10" y1="565.0" x2="247.10" y2="566.5" stroke="#c0c0c0" stroke-width="0.8"/>
<line x1="255.50" y1="565.0" x2="255.50" y2="566.5" stroke="#c0c0c0" stroke-width="0.8"/>
<line x1="263.90" y1="565.0" x2="263.90" y2="566.5" stroke="#c0c0c0" stroke-width="0.8"/>
<line x1="272.30" y1="565.0" x2="272.30" y2="566.5" stroke="#c0c0c0" stroke-width="0.8"/>
<line x1="280.70" y1="565.0" x2="280.70" y2="566.5" stroke="#c0c0c0" stroke-width="0.8"/>
<line x1="289.10" y1="565.0" x2="289.10" y2="566.5" stroke="#c0c0c0" stroke-width="0.8"/>
<line x1="297.50" y1="565.0" x2="297.50" y2="566.5" stroke="#c0c0c0" stroke-width="0.8"/>
<line x1="305.90" y1="565.0" x2="305.90" y2="566.5" stroke="#c0c0c0" stroke-width="0.8"/>
<line x1="314.30" y1="565.0" x2="314.30" y2="566.5" stroke="#c0c0c0" stroke-width="0.8"/>
<line x1="322.70" y1="565.0" x2="322.70" y2="566.5" stroke="#c0c0c0" stroke-width="0.8"/>
<line x1="331.10" y1="565.0" x2="331.10" y2="566.5" stroke="#c0c0c0" stroke-width="0.8"/>
<line x1="339.50" y1="565.0" x2="339.50" y2="566.5" stroke="#c0c0c0" stroke-width="0.8"/>
<line x1="347.90" y1="565.0" x2="347.90" y2="566.5" stroke="#c0c0c0" stroke-width="0.8"/>
<line x1="356.30" y1="565.0" x2="356.30" y2="566.5" stroke="#c0c0c0" stroke-width="0.8"/>
<line x1="364.70" y1="565.0" x2="364.70" y2="566.5" stroke="#c0c0c0" stroke-width="0.8"/>
<line x1="373.10" y1="565.0" x2="373.10" y2="566.5" stroke="#c0c0c0" stroke-width="0.8"/>
<line x1="381.50" y1="565.0" x2="381.50" y2="566.5" stroke="#c0c0c0" stroke-width="0.8"/>
<line x1="389.90" y1="565.0" x2="389.90" y2="566.5" stroke="#c0c0c0" stroke-width="0.8"/>
<line x1="398.30" y1="565.0" x2="398.30" y2="566.5" stroke="#c0c0c0" stroke-width="0.8"/>
<line x1="406.70" y1="565.0" x2="406.70" y2="566.5" stroke="#c0c0c0" stroke-width="0.8"/>
<line x1="415.10" y1="565.0" x2="415.10" y2="566.5" stroke="#c0c0c0" stroke-width="0.8"/>
<line x1="423.50" y1="565.0" x2="423.50" y2="566.5" stroke="#c0c0c0" stroke-width="0.8"/>
<line x1="431.90" y1="565.0" x2="431.90" y2="566.5" stroke="#c0c0c0" stroke-width="0.8"/>
<line x1="440.30" y1="565.0" x2="440.30" y2="566.5" stroke="#c0c0c0" stroke-width="0.8"/>
<line x1="448.70" y1="565.0" x2="448.70" y2="566.5" stroke="#c0c0c0" stroke-width="0.8"/>
<line x1="457.10" y1="565.0" x2="457.10" y2="566.5" stroke="#c0c0c0" stroke-width="0.8"/>
<line x1="465.50" y1="565.0" x2="465.50" y2="566.5" stroke="#c0c0c0" stroke-width="0.8"/>
<line x1="473.90" y1="565.0" x2="473.90" y2="566.5" stroke="#c0c0c0" stroke-width="0.8"/>
<line x1="482.30" y1="565.0" x2="482.30" y2="566.5" stroke="#c0c0c0" stroke-width="0.8"/>
<line x1="490.70" y1="565.0" x2="490.70" y2="566.5" stroke="#c0c0c0" stroke-width="0.8"/>
<line x1="499.10" y1="565.0" x2="499.10" y2="566.5" stroke="#c0c0c0" stroke-width="0.8"/>
<line x1="507.50" y1="565.0" x2="507.50" y2="566.5" stroke="#c0c0c0" stroke-width="0.8"/>
<line x1="515.90" y1="565.0" x2="515.90" y2="566.5" stroke="#c0c0c0" stroke-width="0.8"/>
<line x1="524.30" y1="565.0" x2="524.30" y2="566.5" stroke="#c0c0c0" stroke-width="0.8"/>
<line x1="532.70" y1="565.0" x2="532.70" y2="566.5" stroke="#c0c0c0" stroke-width="0.8"/>
<line x1="541.10" y1="565.0" x2="541.10" y2="566.5" stroke="#c0c0c0" stroke-width="0.8"/>
<line x1="549.50" y1="565.0" x2="549.50" y2="566.5" stroke="#c0c0c0" stroke-width="0.8"/>
<line x1="557.90" y1="565.0" x2="557.90" y2="566.5" stroke="#c0c0c0" stroke-width="0.8"/>
<line x1="566.30" y1="565.0" x2="566.30" y2="566.5" stroke="#c0c0c0" stroke-width="0.8"/>
<line x1="574.70" y1="565.0" x2="574.70" y2="566.5" stroke="#c0c0c0" stroke-width="0.8"/>
<line x1="583.10" y1="565.0" x2="583.10" y2="566.5" stroke="#c0c0c0" stroke-width="0.8"/>
<line x1="591.50" y1="565.0" x2="591.50" y2="566.5" stroke="#c0c0c0" stroke-width="0.8"/>
<line x1="599.90" y1="565.0" x2="599.90" y2="566.5" stroke="#c0c0c0" stroke-width="0.8"/>
<line x1="608.30" y1="565.0" x2="608.30" y2="566.5" stroke="#c0c0c0" stroke-width="0.8"/>
<line x1="616.70" y1="565.0" x2="616.70" y2="566.5" stroke="#c0c0c0" stroke-width="0.8"/>
<line x1="625.10" y1="565.0" x2="625.10" y2="566.5" stroke="#c0c0c0" stroke-width="0.8"/>
<line x1="633.50" y1="565.0" x2="633.50" y2="566.5" stroke="#c0c0c0" stroke-width="0.8"/>
<line x1="641.90" y1="565.0" x2="641.90" y2="566.5" stroke="#c0c0c0" stroke-width="0.8"/>
<line x1="650.30" y1="565.0" x2="650.30" y2="566.5" stroke="#c0c0c0" stroke-width="0.8"/>
<line x1="658.70" y1="565.0" x2="658.70" y2="566.5" stroke="#c0c0c0" stroke-width="0.8"/>
</svg>
<div class="abs clab" style="right:682.6px;top:516.6px">5</div>
<div class="abs clab" style="right:682.6px;top:476.5px">10</div>
<div class="abs clab" style="right:682.6px;top:436.4px">15</div>
<div class="abs clab" style="right:682.6px;top:396.3px">20</div>
<div class="abs clab" style="right:682.6px;top:356.2px">25</div>
<div class="abs clab" style="left:106.1px;width:30px;text-align:center;top:563.4px">0</div>
<div class="abs clab" style="left:173.3px;width:30px;text-align:center;top:563.4px">8</div>
<div class="abs clab" style="left:240.5px;width:30px;text-align:center;top:563.4px">16</div>
<div class="abs clab" style="left:307.7px;width:30px;text-align:center;top:563.4px">24</div>
<div class="abs clab" style="left:374.9px;width:30px;text-align:center;top:563.4px">32</div>
<div class="abs clab" style="left:442.1px;width:30px;text-align:center;top:563.4px">40</div>
<div class="abs clab" style="left:509.3px;width:30px;text-align:center;top:563.4px">48</div>
<div class="abs clab" style="left:576.5px;width:30px;text-align:center;top:563.4px">56</div>
<div class="abs clab" style="left:618.7px;width:80px;text-align:center;top:563.4px;letter-spacing:-0.5px">64MB</div>
<div class="abs clab" style="left:121px;top:350.5px;letter-spacing:-0.6px">MB/s</div>
</body></html>
